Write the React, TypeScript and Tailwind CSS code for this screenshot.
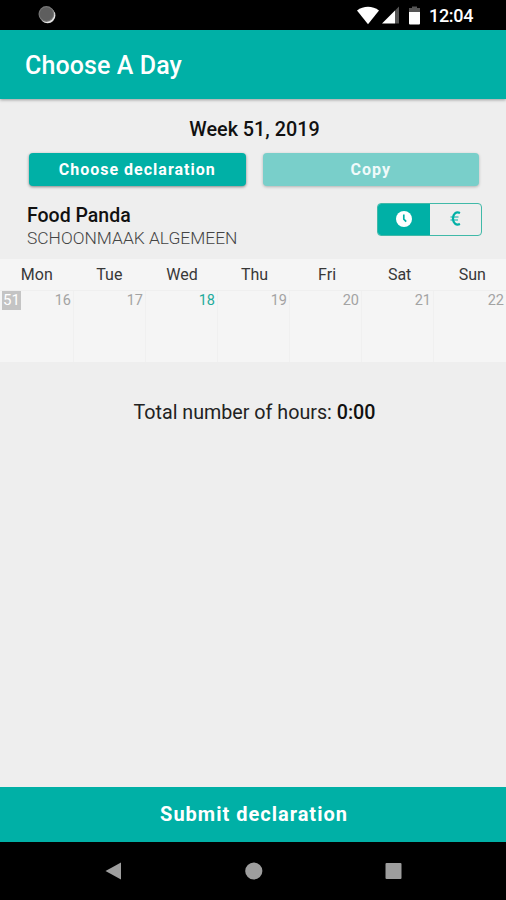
import { useState } from 'react';

interface Day {
  name: string;
  date: number;
  today?: boolean;
}

const DAYS: Day[] = [
  { name: 'Mon', date: 16 },
  { name: 'Tue', date: 17 },
  { name: 'Wed', date: 18, today: true },
  { name: 'Thu', date: 19 },
  { name: 'Fri', date: 20 },
  { name: 'Sat', date: 21 },
  { name: 'Sun', date: 22 },
];

function StatusBar() {
  return (
    <div className="h-[30px] bg-black flex items-center justify-between pl-[38px] pr-[33px] shrink-0">
      <svg className="w-[18px] h-[18px]" viewBox="0 0 18 18">
        <circle cx="9.6" cy="9.4" r="7.8" fill="#e4e4e4" />
        <circle cx="8.4" cy="8" r="7.9" fill="#777" />
        <circle cx="8.4" cy="8" r="6.8" fill="#5e5e5e" />
      </svg>
      <div className="flex items-center">
        <svg className="w-[22px] h-[19px]" viewBox="0 0 22 19">
          <path d="M0 4.5C6.5 -0.5 15.5 -0.5 22 4.5L11 18.2Z" fill="#fff" />
        </svg>
        <svg className="w-[17px] h-[18px] ml-[3px]" viewBox="0 0 17 18">
          <path d="M17 0.5V17.5H13V4.5Z" fill="#555" />
          <path d="M13 4.5V17.5H0Z" fill="#fff" />
        </svg>
        <svg className="w-[11px] h-[19px] ml-[10px]" viewBox="0 0 11 19">
          <path d="M3 0.5H8V2H11V6H0V2H3Z" fill="#555" />
          <path d="M0 6H11V17.5Q11 18.5 10 18.5H1Q0 18.5 0 17.5Z" fill="#fff" />
        </svg>
        <span className="ml-[9px] mt-[2px] w-[44px] text-[18px] leading-none font-medium tracking-[-0.3px] text-white whitespace-nowrap">12:04</span>
      </div>
    </div>
  );
}

function NavBar() {
  return (
    <nav className="h-[58px] bg-black flex items-center justify-between pl-[105px] pr-[104px] shrink-0 text-[#9e9e9e]">
      <svg className="w-[17px] h-[18px]" viewBox="0 0 17 18" fill="currentColor">
        <path d="M16 0.5V17.5L0.5 9Z" />
      </svg>
      <svg className="w-[18px] h-[18px]" viewBox="0 0 18 18" fill="currentColor">
        <circle cx="8.8" cy="9" r="8.6" />
      </svg>
      <svg className="w-[17px] h-[18px]" viewBox="0 0 17 18" fill="currentColor">
        <rect x="0.5" y="1" width="16" height="16" rx="1" />
      </svg>
    </nav>
  );
}

export default function App() {
  const [unit, setUnit] = useState<'hours' | 'money'>('hours');

  const unitClass = (active: boolean) =>
    active
      ? 'flex-1 flex items-center justify-center bg-[#00b0a6] text-white'
      : 'flex-1 flex items-center justify-center text-[#00b0a6]';

  return (
    <div className="w-[506px] h-[900px] flex flex-col bg-[#eeeeee] overflow-hidden font-[Roboto,sans-serif] text-[#111]">
      <StatusBar />

      {/* Header */}
      <header className="h-[69px] bg-[#00b0a6] flex items-center pt-[2px] pl-[25px] shrink-0 shadow-[0_1px_3px_rgba(0,0,0,0.35)]">
        <h1 className="text-[25px] leading-[30px] font-medium tracking-[0.1px] text-white">Choose A Day</h1>
      </header>

      <main className="flex-1 flex flex-col">
        <h2 className="mt-[19px] pl-[3px] text-center text-[19.8px] leading-6 font-medium">Week 51, 2019</h2>

        <div className="mt-[11px] pl-[29px] pr-[27px] grid grid-cols-2 gap-[17px]">
          <button className="h-[33px] rounded-[4px] bg-[#00b0a6] text-white text-[16px] leading-none font-bold tracking-[1px] shadow-[0_1px_3px_rgba(0,0,0,0.45)]">
            Choose declaration
          </button>
          <button className="h-[33px] rounded-[4px] bg-[#79cfca] text-[#f0fafa] text-[16px] leading-none font-bold tracking-[1px] shadow-[0_1px_3px_rgba(0,0,0,0.25)]">
            Copy
          </button>
        </div>

        <div className="mt-[17px] h-[56px] pl-[27px] pr-[24px] flex justify-between">
          <div>
            <p className="pt-px text-[19.5px] leading-6 font-medium">Food Panda</p>
            <p className="text-[17.4px] leading-[21px] font-light text-[#444]">SCHOONMAAK ALGEMEEN</p>
          </div>
          <div className="w-[105px] h-[33px] flex rounded-[4px] border border-[#3fb9a8] overflow-hidden">
            <button className={unitClass(unit === 'hours')} onClick={() => setUnit('hours')}>
              <svg className="w-4 h-4 mb-[2px]" viewBox="0 0 16 16">
                <circle cx="8" cy="8" r="8" fill="currentColor" />
                <path d="M7.8 3.5V8.2L10.2 10.6" fill="none" stroke="#00b0a6" strokeWidth="1.7" />
              </svg>
            </button>
            <button className={unitClass(unit === 'money')} onClick={() => setUnit('money')}>
              <svg className="w-[11px] h-[15px] mb-[2px]" viewBox="0 0 11 15" fill="none" stroke="currentColor">
                <path d="M10 2C6 0.2 3 3 3 7.5S6 14.8 10 13" strokeWidth="2.2" />
                <path d="M0.5 6H8.5M0.5 9H8" strokeWidth="1.1" />
              </svg>
            </button>
          </div>
        </div>

        {/* Week calendar */}
        <section className="h-[103px] bg-[#f5f5f5]">
          <div className="h-[32px] -mr-[2px] grid grid-cols-7 border-b border-[#efefef]">
            {DAYS.map((day) => (
              <span key={day.name} className="pt-[1px] pl-px text-center text-[16px] leading-[30px] text-[#383838]">
                {day.name}
              </span>
            ))}
          </div>
          <div className="h-[71px] pl-[2px] grid grid-cols-7">
            {DAYS.map((day, i) => (
              <div key={day.date} className="flex items-start justify-between border-r border-[#f0f0f0] last:border-r-0">
                {i === 0 ? (
                  <span className="w-[19px] h-[19px] flex items-center justify-center bg-[#c4c4c4] text-white text-[15px] leading-none">
                    51
                  </span>
                ) : (
                  <span />
                )}
                <span className={day.today ? 'pr-[2px] text-[14.5px] leading-5 text-[#1fab9c]' : 'pr-[2px] text-[14.5px] leading-5 text-[#a3a3a3]'}>
                  {day.date}
                </span>
              </div>
            ))}
          </div>
        </section>

        <p className="mt-[39px] pl-[3px] text-center text-[19.7px] leading-6 text-[#222]">
          Total number of hours: <span className="font-medium text-[#111]">0:00</span>
        </p>
      </main>

      <button className="h-[55px] pb-[2px] pl-[2px] shrink-0 bg-[#00b0a6] text-white text-[20px] font-bold tracking-[1px]">
        Submit declaration
      </button>
      <NavBar />
    </div>
  );
}
